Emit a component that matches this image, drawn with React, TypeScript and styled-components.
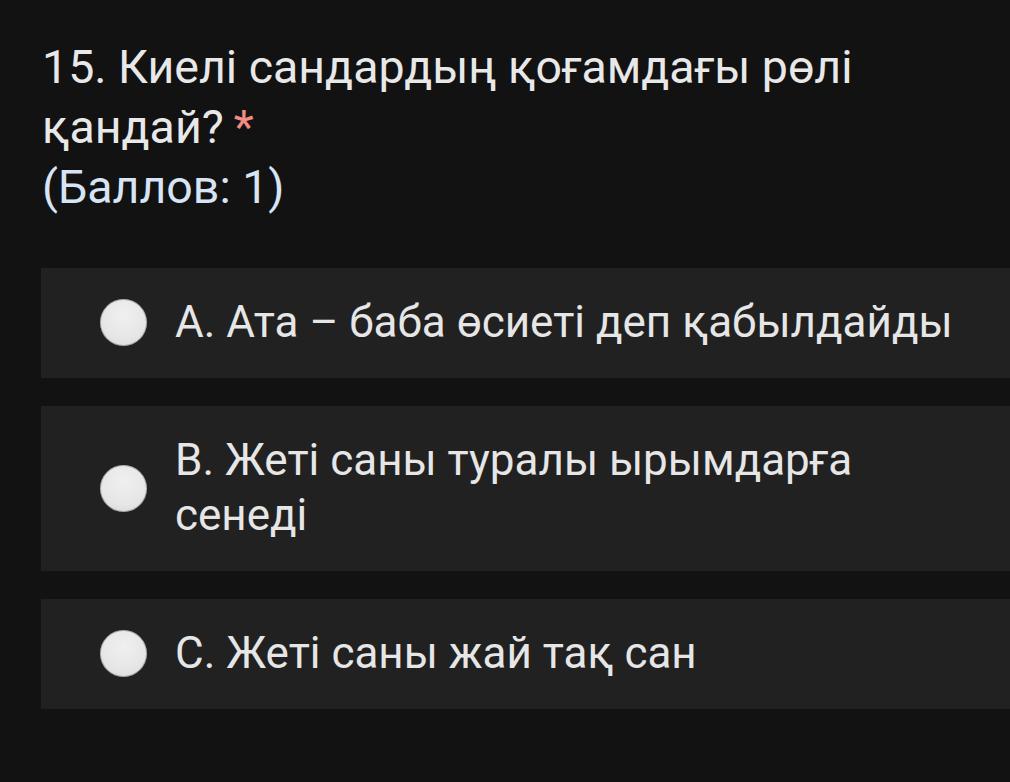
import styled, { createGlobalStyle } from 'styled-components';

const GlobalStyle = createGlobalStyle`
  html, body {
    margin: 0;
    padding: 0;
    background: #121212;
    overflow: hidden;
  }
  body {
    font-family: Roboto, "Noto Sans", "Liberation Sans", sans-serif;
  }
`;

const Page = styled.div`
  width: 1010px;
  height: 782px;
  background: #121212;
  padding: 37px 0 0 41px;
  box-sizing: border-box;
  overflow: hidden;
`;

const Question = styled.h2`
  margin: 0 0 51px 1px;
  font-weight: 400;
  font-size: 46.5px;
  line-height: 60px;
  color: #e8e8e8;
  width: 900px;
`;

const Required = styled.span`
  color: #f28b82;
  margin-left: 10px;
`;

const Points = styled.span`
  display: block;
  color: #d6e4f5;
`;

const Options = styled.div`
  display: flex;
  flex-direction: column;
  gap: 28px;
`;

const Option = styled.label`
  display: flex;
  align-items: center;
  gap: 28px;
  background: #212121;
  width: 1000px;
  padding: 27px 0 28px 59px;
  box-sizing: border-box;
  cursor: pointer;
`;

const Radio = styled.span`
  flex: none;
  width: 47px;
  height: 47px;
  border-radius: 50%;
  background: radial-gradient(circle at 50% 35%, #f0f0f0 0%, #e6e6e6 60%, #d6d6d6 100%);
  box-shadow: 0 0 0 1px rgba(0, 0, 0, 0.25) inset;
`;

const OptionText = styled.span`
  font-size: 44px;
  line-height: 55px;
  color: #e6e6e6;
  max-width: 795px;
`;

const options = [
  'А. Ата – баба өсиеті деп қабылдайды',
  'В. Жеті саны туралы ырымдарға сенеді',
  'С. Жеті саны жай тақ сан',
];

export default function App() {
  return (
    <Page>
      <GlobalStyle />
      <Question>
        15. Киелі сандардың қоғамдағы рөлі қандай?<Required>*</Required>
        <Points>(Баллов: 1)</Points>
      </Question>
      <Options>
        {options.map((text) => (
          <Option key={text}>
            <Radio />
            <OptionText>{text}</OptionText>
          </Option>
        ))}
      </Options>
    </Page>
  );
}
